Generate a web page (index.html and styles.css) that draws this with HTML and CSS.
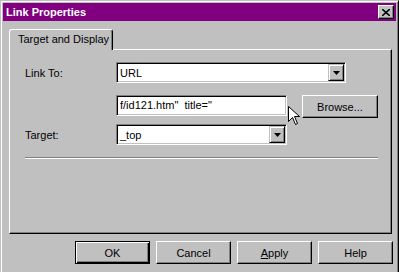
FILE: index.html
```html
<!DOCTYPE html>
<html lang="en">
<head>
  <meta charset="UTF-8">
  <title>Link Properties</title>
  <link rel="stylesheet" href="styles.css">
</head>
<body>

<div class="window">
  <div class="titlebar">
    <span class="title">Link Properties</span>
    <span class="close">
      <svg width="8" height="7" viewBox="0 0 8 7">
        <path d="M0 0 L8 7 M8 0 L0 7" stroke="#000" stroke-width="1.6"/>
      </svg>
    </span>
  </div>

  <div class="tabs">
    <div class="tab">Target and Display</div>
  </div>

  <div class="panel">
    <div class="row">
      <span class="label">Link To:</span>
      <div class="combo wide">
        <span class="value">URL</span>
        <span class="drop"><svg width="7" height="4" viewBox="0 0 7 4"><path d="M0 0 H7 L3.5 4 Z" fill="#000"/></svg></span>
      </div>
    </div>

    <div class="row row-url">
      <span class="label"></span>
      <div class="field">f/id121.htm"&nbsp; title="</div>
      <button class="btn browse">Browse...</button>
    </div>

    <div class="row row-target">
      <span class="label">Target:</span>
      <div class="combo">
        <span class="value">_top</span>
        <span class="drop"><svg width="7" height="4" viewBox="0 0 7 4"><path d="M0 0 H7 L3.5 4 Z" fill="#000"/></svg></span>
      </div>
    </div>

    <div class="separator"></div>
  </div>

  <div class="buttons">
    <button class="btn default">OK</button>
    <button class="btn">Cancel</button>
    <button class="btn"><u>A</u>pply</button>
    <button class="btn">Help</button>
  </div>

  <!-- pointeur de souris au-dessus du champ -->
  <svg class="cursor" width="12" height="20" viewBox="0 0 12 20">
    <path d="M0.5 0.5 L0.5 15.5 L4.5 11.5 L7.5 18.5 L9.5 17.5 L6.5 10.5 L11.5 10.5 Z" fill="#fff" stroke="#000" stroke-width="1"/>
  </svg>
</div>

</body>
</html>
```

FILE: styles.css
```css
body {
  margin: 0;
  background-color: #c0c0c0;
  font-family: "Liberation Sans", Arial, sans-serif;
  font-size: 11px;
  color: #000;
}

/* Fenêtre */
.window {
  position: relative;
  width: 399px;
  height: 280px;
  box-sizing: border-box;
  padding: 2px;
  border: 1px solid;
  border-color: #c0c0c0 #000 #000 #c0c0c0;
  box-shadow: inset 1px 1px #fff, inset -1px -1px #808080;
  background-color: #c0c0c0;
}

.titlebar {
  height: 18px;
  display: flex;
  align-items: center;
  justify-content: space-between;
  padding: 0 2px 0 3px;
  background-color: #800080;
  color: #fff;
  font-weight: bold;
  font-size: 11px;
}

.close {
  width: 16px;
  height: 14px;
  box-sizing: border-box;
  display: flex;
  align-items: center;
  justify-content: center;
  background-color: #c0c0c0;
  border: 1px solid;
  border-color: #fff #000 #000 #fff;
  box-shadow: inset -1px -1px #808080;
}

/* Onglet */
.tabs {
  padding: 8px 0 0 6px;
  height: 21px;
}

.tab {
  position: relative;
  z-index: 1;
  width: 104px;
  height: 21px;
  box-sizing: border-box;
  padding-left: 8px;
  line-height: 19px;
  border-left: 1px solid #fff;
  border-top: 1px solid #fff;
  border-right: 1px solid #000;
  border-radius: 3px 3px 0 0;
  box-shadow: inset -1px 0 #808080;
  background-color: #c0c0c0;
}

.panel {
  width: 383px;
  height: 185px;
  box-sizing: border-box;
  margin: -1px 0 0 6px;
  padding: 12px 0 0 15px;
  border: 1px solid;
  border-color: #fff #000 #000 #fff;
  box-shadow: inset -1px -1px #808080;
}

.row {
  display: flex;
  align-items: center;
  height: 21px;
}

.label {
  width: 91px;
  flex: none;
}

.row-url {
  margin-top: 12px;
  height: 23px;
  align-items: flex-start;
}

.row-target {
  margin-top: 6px;
}

/* Champs creusés */
.field,
.combo {
  width: 171px;
  height: 21px;
  box-sizing: border-box;
  border: 1px solid;
  border-color: #808080 #fff #fff #808080;
  box-shadow: inset 1px 1px #000, inset -1px -1px #c0c0c0;
  background-color: #fff;
}

.field {
  padding-left: 3px;
  line-height: 19px;
  white-space: nowrap;
  overflow: hidden;
}

.combo {
  display: flex;
  align-items: center;
}

.combo.wide {
  width: 230px;
}

.value {
  flex: 1;
  padding-left: 3px;
}

.drop {
  width: 16px;
  height: 17px;
  margin-right: 1px;
  box-sizing: border-box;
  display: flex;
  align-items: center;
  justify-content: center;
  border: 1px solid;
  border-color: #c0c0c0 #000 #000 #c0c0c0;
  box-shadow: inset 1px 1px #fff, inset -1px -1px #808080;
  background-color: #c0c0c0;
}

.separator {
  width: 353px;
  margin-top: 12px;
  border-top: 1px solid #808080;
  border-bottom: 1px solid #fff;
}

/* Boutons */
.btn {
  width: 75px;
  height: 23px;
  padding: 0;
  box-sizing: border-box;
  font-family: inherit;
  font-size: 11px;
  color: #000;
  background-color: #c0c0c0;
  border: 1px solid;
  border-color: #fff #000 #000 #fff;
  box-shadow: inset -1px -1px #808080;
}

.btn.browse {
  width: 76px;
  margin-left: 15px;
}

.btn.default {
  border-color: #000;
  box-shadow: inset 1px 1px #fff, inset -1px -1px #000, inset -2px -2px #808080;
}

.buttons {
  display: flex;
  justify-content: flex-end;
  gap: 6px;
  padding: 7px 3px 0 0;
}

.cursor {
  position: absolute;
  left: 287px;
  top: 105px;
}
```
